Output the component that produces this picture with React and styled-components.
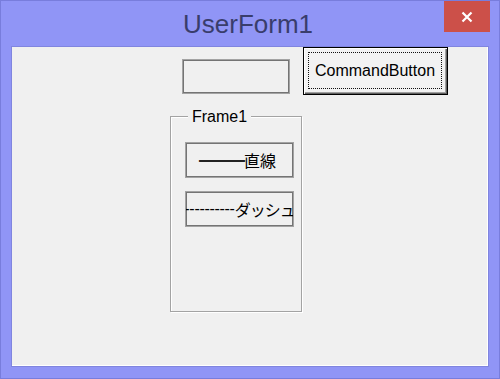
import React from "react";
import styled, { createGlobalStyle } from "styled-components";

const Global = createGlobalStyle`
  html, body { margin: 0; padding: 0; background: #9095f6; }
  body { font-family: "Liberation Sans", "Noto Sans CJK JP", sans-serif; }
  * { box-sizing: border-box; }
`;

const Window = styled.div`
  width: 500px;
  height: 379px;
  border: 1px solid #787ddc;
  background: #9095f6;
  display: flex;
  flex-direction: column;
`;

const TitleBar = styled.div`
  height: 46px;
  flex: none;
  display: grid;
  grid-template-columns: 1fr auto 1fr;
  align-items: start;
`;

const Title = styled.div`
  grid-column: 2;
  margin-top: 8px;
  font-family: "Liberation Sans", sans-serif;
  font-size: 26px;
  line-height: 30px;
  color: #393d6c;
  transform: translateX(-2px);
`;

const CloseButton = styled.div`
  grid-column: 3;
  justify-self: end;
  margin-right: 9px;
  width: 46px;
  height: 31px;
  background: #cc5049;
  display: flex;
  align-items: center;
  justify-content: center;
`;

const Client = styled.div`
  flex: 1;
  margin: 0 11px 12px 11px;
  background: #f0f0f0;
  box-shadow: 0 0 0 1px #8085df, inset -1px -1px 0 #ffffff;
  display: flex;
  flex-direction: column;
  align-items: flex-start;
`;

const TopRow = styled.div`
  display: flex;
  align-items: flex-start;
  gap: 13px;
  padding-left: 170px;
`;

const TextBox = styled.div`
  width: 108px;
  height: 35px;
  margin-top: 12px;
  background: #f0f0f0;
  border: 1px solid #a3a3a3;
  box-shadow: inset 0 0 0 1px #747474;
`;

const CommandButton = styled.div`
  width: 145px;
  height: 48px;
  border: 1px solid #000;
  background: #f2f2f2;
  box-shadow: inset 1px 1px 0 #ffffff, inset -1px -1px 0 #5f5f5f, inset -2px -2px 0 #a0a0a0;
  padding: 4px 5px 5px 4px;
  display: flex;
`;

const FocusRect = styled.div`
  flex: 1;
  border: 1px dotted #111;
  display: flex;
  align-items: center;
  justify-content: center;
  font-size: 16px;
  color: #000;
`;

const Frame = styled.div`
  position: relative;
  margin-left: 158px;
  margin-top: 21px;
  width: 132px;
  height: 196px;
  border: 1px solid #a3a3a3;
  box-shadow: inset 1px 1px 0 #ffffff, 1px 1px 0 #ffffff;
  padding: 25px 0 0 14px;
  display: flex;
  flex-direction: column;
  gap: 13px;
`;

const FrameLabel = styled.div`
  position: absolute;
  top: -9px;
  left: 17px;
  padding: 0 4px;
  background: #f0f0f0;
  font-size: 16px;
  line-height: 18px;
  color: #000;
`;

const LineButton = styled.div`
  width: 109px;
  height: 36px;
  border: 1px solid #a3a3a3;
  box-shadow: inset 0 0 0 1px #747474;
  background: #f0f0f0;
  display: flex;
  align-items: center;
  justify-content: center;
  white-space: nowrap;
  overflow: hidden;
  font-size: 16px;
  color: #000;
  font-family: "Noto Sans CJK JP", sans-serif;
  letter-spacing: ${(p) => (p.$tight ? "-1px" : "0")};
  padding-right: ${(p) => (p.$tight ? "0" : "4px")};
`;

const Stroke = styled.span`
  font-family: "Noto Sans CJK JP", sans-serif;
  letter-spacing: -1px;
  color: #222;
`;

const Dashes = styled.span`
  font-family: "Liberation Sans", sans-serif;
  letter-spacing: -0.3px;
`;

export default function App() {
  return (
    <>
      <Global />
      <Window>
        <TitleBar>
          <Title>UserForm1</Title>
          <CloseButton>
            <svg width="12" height="12" viewBox="0 0 12 12">
              <path d="M1.5 1.5 L10.5 10.5 M10.5 1.5 L1.5 10.5" stroke="#fff" strokeWidth="2.2" fill="none" />
            </svg>
          </CloseButton>
        </TitleBar>
        <Client>
          <TopRow>
            <TextBox />
            <CommandButton>
              <FocusRect>CommandButton</FocusRect>
            </CommandButton>
          </TopRow>
          <Frame>
            <FrameLabel>Frame1</FrameLabel>
            <LineButton>
              <Stroke>━━━</Stroke>直線
            </LineButton>
            <LineButton $tight>
              <Dashes>----------</Dashes>ダッシュ
            </LineButton>
          </Frame>
        </Client>
      </Window>
    </>
  );
}
